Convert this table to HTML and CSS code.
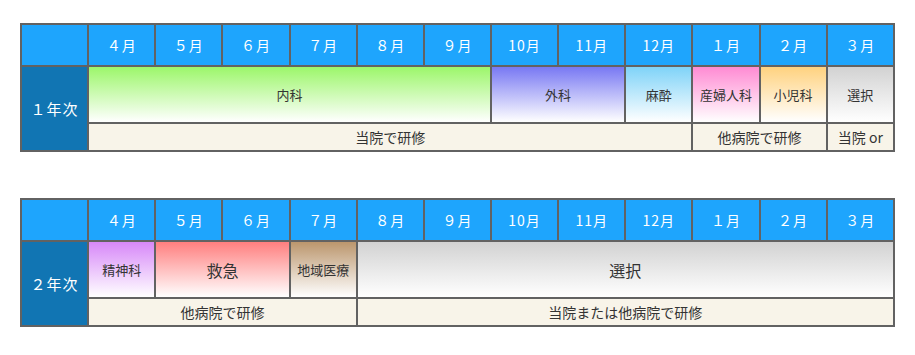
FILE: index.html
```html
<!DOCTYPE html>
<html lang="ja">
<head>
  <meta charset="UTF-8">
  <title>研修スケジュール</title>
  <link rel="stylesheet" href="styles.css">
</head>
<body>

<!-- 1年次 -->
<table class="schedule">
  <tr class="months">
    <th class="corner"></th>
    <th>４月</th><th>５月</th><th>６月</th><th>７月</th><th>８月</th><th>９月</th>
    <th>10月</th><th>11月</th><th>12月</th><th>１月</th><th>２月</th><th>３月</th>
  </tr>
  <tr class="dept">
    <th class="year" rowspan="2">１年次</th>
    <td colspan="6" class="naika">内科</td>
    <td colspan="2" class="geka">外科</td>
    <td class="masui">麻酔</td>
    <td class="sanfu">産婦人科</td>
    <td class="shoni">小児科</td>
    <td class="sentaku">選択</td>
  </tr>
  <tr class="place">
    <td colspan="9">当院で研修</td>
    <td colspan="2">他病院で研修</td>
    <td>当院 or</td>
  </tr>
</table>

<!-- 2年次 -->
<table class="schedule">
  <tr class="months">
    <th class="corner"></th>
    <th>４月</th><th>５月</th><th>６月</th><th>７月</th><th>８月</th><th>９月</th>
    <th>10月</th><th>11月</th><th>12月</th><th>１月</th><th>２月</th><th>３月</th>
  </tr>
  <tr class="dept">
    <th class="year" rowspan="2">２年次</th>
    <td class="seishin">精神科</td>
    <td colspan="2" class="kyukyu big">救急</td>
    <td class="chiiki">地域医療</td>
    <td colspan="8" class="sentaku big">選択</td>
  </tr>
  <tr class="place">
    <td colspan="4">他病院で研修</td>
    <td colspan="8">当院または他病院で研修</td>
  </tr>
</table>

</body>
</html>
```

FILE: styles.css
```css
body {
  margin: 0;
  padding: 23px 0 0 20px;
  background: #fff;
  font-family: "Noto Sans CJK JP", "Noto Sans", sans-serif;
  color: #333;
}
.schedule {
  border-collapse: collapse;
  table-layout: fixed;
  width: 875px;
  margin-bottom: 46px;
}
.schedule:last-child {
  margin-bottom: 0;
}
.schedule th,
.schedule td {
  border: 2px solid #626262;
  text-align: center;
  vertical-align: middle;
  padding: 0;
  overflow: hidden;
  white-space: nowrap;
}
.months th {
  height: 40px;
  background: #1ea5fd;
  color: #fff;
  font-size: 14px;
  font-weight: normal;
  letter-spacing: 1px;
}
.year {
  background: #1175b3;
  color: #fff;
  font-size: 15px;
  font-weight: normal;
  letter-spacing: 1px;
}
.dept td {
  height: 55px;
  font-size: 13px;
}
.dept td.big {
  font-size: 16px;
}
.place td {
  height: 26px;
  background: #f8f4e9;
  font-size: 14px;
}

/* 診療科ごとのグラデーション */
.naika   { background: linear-gradient(#9cf66a, #fff); }
.geka    { background: linear-gradient(#7878f3, #fff); }
.masui   { background: linear-gradient(#7fd3f8, #fff); }
.sanfu   { background: linear-gradient(#ff8bd3, #fff); }
.shoni   { background: linear-gradient(#ffd27f, #fff); }
.sentaku { background: linear-gradient(#d2d2d2, #fff); }
.seishin { background: linear-gradient(#d788f8, #fff); }
.kyukyu  { background: linear-gradient(#ff7f7f, #fff); }
.chiiki  { background: linear-gradient(#bb966d, #fff); }
```
